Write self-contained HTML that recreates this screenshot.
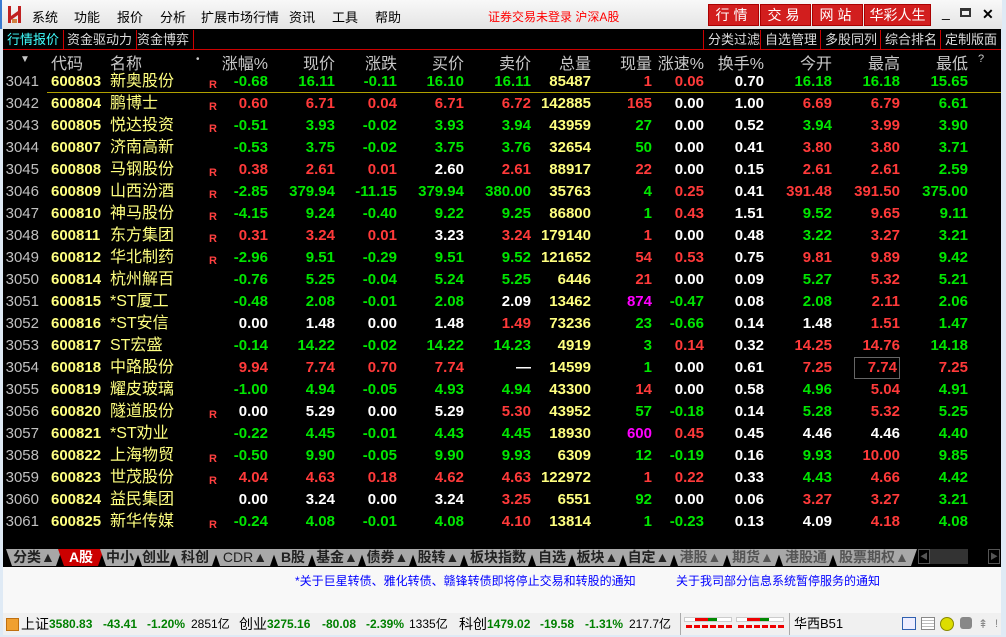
<!DOCTYPE html>
<html><head><meta charset="utf-8"><style>
*{margin:0;padding:0;box-sizing:border-box}
body{width:1006px;height:637px;overflow:hidden;background:#dfeaf5;font-family:"Liberation Sans","Noto Sans CJK SC",sans-serif;position:relative}
.title{position:absolute;left:0;top:0;width:1002px;height:29px;background:linear-gradient(#f8f8f8,#e4e4e4);border-left:2px solid #3a7ad0}
.menu{position:absolute;top:7px;font-size:13px;color:#000}
.logo{position:absolute;left:6px;top:6px;width:14px;height:17px}
.btn{position:absolute;top:4px;height:22px;background:#d21e1e;border:1px solid #a00;color:#fff;font-size:14px;text-align:center;line-height:20px;letter-spacing:4px}
.main{position:absolute;left:3px;top:29px;width:998px;height:518px;background:#000}
.tab{position:absolute;top:1px;height:19px;font-size:13px;line-height:19px;color:#ddd;border-right:1px solid #c00;padding:0 4px}
.tr{position:absolute;top:1px;height:19px;font-size:13px;line-height:19px;color:#ddd;border-left:1px solid #c00;padding:0 4px}
.redline{position:absolute;left:0;top:20px;width:998px;height:1px;background:#c00}
.hdr{position:absolute;top:21px;height:20px;left:0;width:998px;font-size:16px;color:#c8c8c8}
.row{position:absolute;left:0;width:998px;height:22px;font-size:15px;font-weight:bold;line-height:22px}
.row span,.hdr span{position:absolute;white-space:nowrap}
.i{left:0;width:36px;text-align:right;color:#c0c0c0;font-weight:normal}
.c{left:48px;color:#ffff80}
.n{left:107px;color:#ffff80;font-weight:normal;font-size:16px}
.R{left:206px;color:#ff4040;font-size:11px;top:3px}
.k1,.k2,.k3,.k4,.k5,.k6,.k7,.k8,.k9,.k10,.k11,.k12{width:70px;text-align:right}
.k1{left:195px}.k2{left:262px}.k3{left:324px}.k4{left:391px}.k5{left:458px}.k6{left:518px}.k7{left:579px}.k8{left:631px}.k9{left:691px}.k10{left:759px}.k11{left:827px}.k12{left:895px}
.g{color:#00e600}.r{color:#ff3a3a}.w{color:#fff}.y{color:#ffff80}.m{color:#ff00ff}
.btabs{position:absolute;left:3px;top:547px;width:998px;height:20px;background:#000}
.bt{position:absolute;top:2px;height:17px;background:#a8a8a8;color:#222;font-size:14px;font-weight:bold;line-height:17px;text-align:center;clip-path:polygon(0 0,100% 0,calc(100% - 6px) 100%,6px 100%)}
.notice{position:absolute;left:3px;top:567px;width:998px;height:46px;background:#f8f8f8;color:#0000ff;font-size:12px}
.status{position:absolute;left:3px;top:613px;width:998px;height:22px;background:#f0f0f0;font-size:12px;line-height:22px}
.status span{position:absolute}
.sg{color:#008000;font-weight:bold}
</style></head><body>
<div class="title">
 <svg class="logo" viewBox="0 0 14 17"><rect x="0" y="0" width="3" height="17" fill="#c02020"/><rect x="10" y="0" width="3" height="17" fill="#c02020"/><polygon points="3,10 10,5 10,9 3,14" fill="#c02020"/><rect x="4" y="13" width="5" height="4" fill="#d08040"/></svg>
 <span class="menu" style="left:30px">系统</span><span class="menu" style="left:72px">功能</span><span class="menu" style="left:115px">报价</span><span class="menu" style="left:158px">分析</span><span class="menu" style="left:199px">扩展市场行情</span><span class="menu" style="left:287px">资讯</span><span class="menu" style="left:330px">工具</span><span class="menu" style="left:373px">帮助</span>
 <span class="menu" style="left:486px;color:#f00;font-size:12px;top:8px">证券交易未登录 沪深A股</span>
 <div class="btn" style="left:706px;width:51px">行情</div><div class="btn" style="left:758px;width:51px">交易</div><div class="btn" style="left:810px;width:51px">网站</div><div class="btn" style="left:862px;width:67px;letter-spacing:0">华彩人生</div>
 <span class="menu" style="left:940px;top:4px;font-size:14px">_</span><span class="menu" style="left:958px;top:8px;width:11px;height:9px;border:2px solid #333;border-top-width:3px"></span><span class="menu" style="left:980px;top:6px;font-weight:bold;font-size:14px">✕</span>
</div>
<div class="main">
 <div class="tab" style="left:0;color:#40ffff">行情报价</div><div class="tab" style="left:60px">资金驱动力</div><div class="tab" style="left:130px">资金博弈</div>
 <div class="tr" style="left:700px">分类过滤</div><div class="tr" style="left:757px">自选管理</div><div class="tr" style="left:817px">多股同列</div><div class="tr" style="left:877px">综合排名</div><div class="tr" style="left:937px">定制版面</div>
 <div class="redline"></div>
 <div class="hdr">
  <span style="left:17px;font-size:10px;top:4px">▼</span><span style="left:48px">代码</span><span style="left:107px">名称</span><span style="left:193px;font-size:10px;top:4px">•</span>
  <span class="k1">涨幅%</span><span class="k2">现价</span><span class="k3">涨跌</span><span class="k4">买价</span><span class="k5">卖价</span><span class="k6">总量</span><span class="k7">现量</span><span class="k8">涨速%</span><span class="k9">换手%</span><span class="k10">今开</span><span class="k11">最高</span><span class="k12">最低</span><span style="left:975px;font-size:11px;top:3px">?</span>
 </div>
 <div style="position:absolute;left:44px;top:63px;width:954px;height:1px;background:#b0a000"></div>

<div class="row" style="top:42px"><span class="i">3041</span><span class="c">600803</span><span class="n">新奥股份</span><span class="R">R</span><span class="k1 g">-0.68</span><span class="k2 g">16.11</span><span class="k3 g">-0.11</span><span class="k4 g">16.10</span><span class="k5 g">16.11</span><span class="k6 y">85487</span><span class="k7 r">1</span><span class="k8 r">0.06</span><span class="k9 w">0.70</span><span class="k10 g">16.18</span><span class="k11 g">16.18</span><span class="k12 g">15.65</span></div>
<div class="row" style="top:64px"><span class="i">3042</span><span class="c">600804</span><span class="n">鹏博士</span><span class="R">R</span><span class="k1 r">0.60</span><span class="k2 r">6.71</span><span class="k3 r">0.04</span><span class="k4 r">6.71</span><span class="k5 r">6.72</span><span class="k6 y">142885</span><span class="k7 r">165</span><span class="k8 w">0.00</span><span class="k9 w">1.00</span><span class="k10 r">6.69</span><span class="k11 r">6.79</span><span class="k12 g">6.61</span></div>
<div class="row" style="top:86px"><span class="i">3043</span><span class="c">600805</span><span class="n">悦达投资</span><span class="R">R</span><span class="k1 g">-0.51</span><span class="k2 g">3.93</span><span class="k3 g">-0.02</span><span class="k4 g">3.93</span><span class="k5 g">3.94</span><span class="k6 y">43959</span><span class="k7 g">27</span><span class="k8 w">0.00</span><span class="k9 w">0.52</span><span class="k10 g">3.94</span><span class="k11 r">3.99</span><span class="k12 g">3.90</span></div>
<div class="row" style="top:108px"><span class="i">3044</span><span class="c">600807</span><span class="n">济南高新</span><span class="k1 g">-0.53</span><span class="k2 g">3.75</span><span class="k3 g">-0.02</span><span class="k4 g">3.75</span><span class="k5 g">3.76</span><span class="k6 y">32654</span><span class="k7 g">50</span><span class="k8 w">0.00</span><span class="k9 w">0.41</span><span class="k10 r">3.80</span><span class="k11 r">3.80</span><span class="k12 g">3.71</span></div>
<div class="row" style="top:130px"><span class="i">3045</span><span class="c">600808</span><span class="n">马钢股份</span><span class="R">R</span><span class="k1 r">0.38</span><span class="k2 r">2.61</span><span class="k3 r">0.01</span><span class="k4 w">2.60</span><span class="k5 r">2.61</span><span class="k6 y">88917</span><span class="k7 r">22</span><span class="k8 w">0.00</span><span class="k9 w">0.15</span><span class="k10 r">2.61</span><span class="k11 r">2.61</span><span class="k12 g">2.59</span></div>
<div class="row" style="top:152px"><span class="i">3046</span><span class="c">600809</span><span class="n">山西汾酒</span><span class="R">R</span><span class="k1 g">-2.85</span><span class="k2 g">379.94</span><span class="k3 g">-11.15</span><span class="k4 g">379.94</span><span class="k5 g">380.00</span><span class="k6 y">35763</span><span class="k7 g">4</span><span class="k8 r">0.25</span><span class="k9 w">0.41</span><span class="k10 r">391.48</span><span class="k11 r">391.50</span><span class="k12 g">375.00</span></div>
<div class="row" style="top:174px"><span class="i">3047</span><span class="c">600810</span><span class="n">神马股份</span><span class="R">R</span><span class="k1 g">-4.15</span><span class="k2 g">9.24</span><span class="k3 g">-0.40</span><span class="k4 g">9.22</span><span class="k5 g">9.25</span><span class="k6 y">86800</span><span class="k7 g">1</span><span class="k8 r">0.43</span><span class="k9 w">1.51</span><span class="k10 g">9.52</span><span class="k11 r">9.65</span><span class="k12 g">9.11</span></div>
<div class="row" style="top:196px"><span class="i">3048</span><span class="c">600811</span><span class="n">东方集团</span><span class="R">R</span><span class="k1 r">0.31</span><span class="k2 r">3.24</span><span class="k3 r">0.01</span><span class="k4 w">3.23</span><span class="k5 r">3.24</span><span class="k6 y">179140</span><span class="k7 r">1</span><span class="k8 w">0.00</span><span class="k9 w">0.48</span><span class="k10 g">3.22</span><span class="k11 r">3.27</span><span class="k12 g">3.21</span></div>
<div class="row" style="top:218px"><span class="i">3049</span><span class="c">600812</span><span class="n">华北制药</span><span class="R">R</span><span class="k1 g">-2.96</span><span class="k2 g">9.51</span><span class="k3 g">-0.29</span><span class="k4 g">9.51</span><span class="k5 g">9.52</span><span class="k6 y">121652</span><span class="k7 r">54</span><span class="k8 r">0.53</span><span class="k9 w">0.75</span><span class="k10 r">9.81</span><span class="k11 r">9.89</span><span class="k12 g">9.42</span></div>
<div class="row" style="top:240px"><span class="i">3050</span><span class="c">600814</span><span class="n">杭州解百</span><span class="k1 g">-0.76</span><span class="k2 g">5.25</span><span class="k3 g">-0.04</span><span class="k4 g">5.24</span><span class="k5 g">5.25</span><span class="k6 y">6446</span><span class="k7 r">21</span><span class="k8 w">0.00</span><span class="k9 w">0.09</span><span class="k10 g">5.27</span><span class="k11 r">5.32</span><span class="k12 g">5.21</span></div>
<div class="row" style="top:262px"><span class="i">3051</span><span class="c">600815</span><span class="n">*ST厦工</span><span class="k1 g">-0.48</span><span class="k2 g">2.08</span><span class="k3 g">-0.01</span><span class="k4 g">2.08</span><span class="k5 w">2.09</span><span class="k6 y">13462</span><span class="k7 m">874</span><span class="k8 g">-0.47</span><span class="k9 w">0.08</span><span class="k10 g">2.08</span><span class="k11 r">2.11</span><span class="k12 g">2.06</span></div>
<div class="row" style="top:284px"><span class="i">3052</span><span class="c">600816</span><span class="n">*ST安信</span><span class="k1 w">0.00</span><span class="k2 w">1.48</span><span class="k3 w">0.00</span><span class="k4 w">1.48</span><span class="k5 r">1.49</span><span class="k6 y">73236</span><span class="k7 g">23</span><span class="k8 g">-0.66</span><span class="k9 w">0.14</span><span class="k10 w">1.48</span><span class="k11 r">1.51</span><span class="k12 g">1.47</span></div>
<div class="row" style="top:306px"><span class="i">3053</span><span class="c">600817</span><span class="n">ST宏盛</span><span class="k1 g">-0.14</span><span class="k2 g">14.22</span><span class="k3 g">-0.02</span><span class="k4 g">14.22</span><span class="k5 g">14.23</span><span class="k6 y">4919</span><span class="k7 g">3</span><span class="k8 r">0.14</span><span class="k9 w">0.32</span><span class="k10 r">14.25</span><span class="k11 r">14.76</span><span class="k12 g">14.18</span></div>
<div class="row" style="top:328px"><span class="i">3054</span><span class="c">600818</span><span class="n">中路股份</span><span class="k1 r">9.94</span><span class="k2 r">7.74</span><span class="k3 r">0.70</span><span class="k4 r">7.74</span><span class="k5 w">—</span><span class="k6 y">14599</span><span class="k7 g">1</span><span class="k8 w">0.00</span><span class="k9 w">0.61</span><span class="k10 r">7.25</span><span class="k11 r" style="border:1px solid #666;width:46px;left:851px;line-height:20px;height:22px;padding-right:2px">7.74</span><span class="k12 r">7.25</span></div>
<div class="row" style="top:350px"><span class="i">3055</span><span class="c">600819</span><span class="n">耀皮玻璃</span><span class="k1 g">-1.00</span><span class="k2 g">4.94</span><span class="k3 g">-0.05</span><span class="k4 g">4.93</span><span class="k5 g">4.94</span><span class="k6 y">43300</span><span class="k7 r">14</span><span class="k8 w">0.00</span><span class="k9 w">0.58</span><span class="k10 g">4.96</span><span class="k11 r">5.04</span><span class="k12 g">4.91</span></div>
<div class="row" style="top:372px"><span class="i">3056</span><span class="c">600820</span><span class="n">隧道股份</span><span class="R">R</span><span class="k1 w">0.00</span><span class="k2 w">5.29</span><span class="k3 w">0.00</span><span class="k4 w">5.29</span><span class="k5 r">5.30</span><span class="k6 y">43952</span><span class="k7 g">57</span><span class="k8 g">-0.18</span><span class="k9 w">0.14</span><span class="k10 g">5.28</span><span class="k11 r">5.32</span><span class="k12 g">5.25</span></div>
<div class="row" style="top:394px"><span class="i">3057</span><span class="c">600821</span><span class="n">*ST劝业</span><span class="k1 g">-0.22</span><span class="k2 g">4.45</span><span class="k3 g">-0.01</span><span class="k4 g">4.43</span><span class="k5 g">4.45</span><span class="k6 y">18930</span><span class="k7 m">600</span><span class="k8 r">0.45</span><span class="k9 w">0.45</span><span class="k10 w">4.46</span><span class="k11 w">4.46</span><span class="k12 g">4.40</span></div>
<div class="row" style="top:416px"><span class="i">3058</span><span class="c">600822</span><span class="n">上海物贸</span><span class="R">R</span><span class="k1 g">-0.50</span><span class="k2 g">9.90</span><span class="k3 g">-0.05</span><span class="k4 g">9.90</span><span class="k5 g">9.93</span><span class="k6 y">6309</span><span class="k7 g">12</span><span class="k8 g">-0.19</span><span class="k9 w">0.16</span><span class="k10 g">9.93</span><span class="k11 r">10.00</span><span class="k12 g">9.85</span></div>
<div class="row" style="top:438px"><span class="i">3059</span><span class="c">600823</span><span class="n">世茂股份</span><span class="R">R</span><span class="k1 r">4.04</span><span class="k2 r">4.63</span><span class="k3 r">0.18</span><span class="k4 r">4.62</span><span class="k5 r">4.63</span><span class="k6 y">122972</span><span class="k7 r">1</span><span class="k8 r">0.22</span><span class="k9 w">0.33</span><span class="k10 g">4.43</span><span class="k11 r">4.66</span><span class="k12 g">4.42</span></div>
<div class="row" style="top:460px"><span class="i">3060</span><span class="c">600824</span><span class="n">益民集团</span><span class="k1 w">0.00</span><span class="k2 w">3.24</span><span class="k3 w">0.00</span><span class="k4 w">3.24</span><span class="k5 r">3.25</span><span class="k6 y">6551</span><span class="k7 g">92</span><span class="k8 w">0.00</span><span class="k9 w">0.06</span><span class="k10 r">3.27</span><span class="k11 r">3.27</span><span class="k12 g">3.21</span></div>
<div class="row" style="top:482px"><span class="i">3061</span><span class="c">600825</span><span class="n">新华传媒</span><span class="R">R</span><span class="k1 g">-0.24</span><span class="k2 g">4.08</span><span class="k3 g">-0.01</span><span class="k4 g">4.08</span><span class="k5 r">4.10</span><span class="k6 y">13814</span><span class="k7 g">1</span><span class="k8 g">-0.23</span><span class="k9 w">0.13</span><span class="k10 w">4.09</span><span class="k11 r">4.18</span><span class="k12 g">4.08</span></div>
</div>
<div class="btabs">
 <div class="bt" style="left:3px;width:56px">分类▲</div>
 <div class="bt" style="left:55px;width:46px;background:#c00;color:#fff">A股</div>
 <div class="bt" style="left:97px;width:40px">中小</div>
 <div class="bt" style="left:133px;width:40px">创业</div>
 <div class="bt" style="left:169px;width:46px">科创</div>
 <div class="bt" style="left:211px;width:62px;font-weight:normal">CDR▲</div>
 <div class="bt" style="left:269px;width:42px">B股</div>
 <div class="bt" style="left:307px;width:54px">基金▲</div>
 <div class="bt" style="left:357px;width:55px">债券▲</div>
 <div class="bt" style="left:408px;width:55px">股转▲</div>
 <div class="bt" style="left:459px;width:72px">板块指数</div>
 <div class="bt" style="left:527px;width:44px">自选</div>
 <div class="bt" style="left:567px;width:55px">板块▲</div>
 <div class="bt" style="left:618px;width:55px">自定▲</div>
 <div class="bt" style="left:669px;width:57px;color:#555">港股▲</div>
 <div class="bt" style="left:722px;width:56px;color:#555">期货▲</div>
 <div class="bt" style="left:774px;width:58px;color:#555">港股通</div>
 <div class="bt" style="left:828px;width:86px;color:#555">股票期权▲</div>
 <div style="position:absolute;left:915px;top:2px;width:12px;height:15px;border:1px solid #555;color:#555;font-size:8px;line-height:13px;text-align:center">◀</div>
 <div style="position:absolute;left:927px;top:2px;width:38px;height:15px;background:#333"></div>
 <div style="position:absolute;left:985px;top:2px;width:12px;height:15px;border:1px solid #555;color:#555;font-size:8px;line-height:13px;text-align:center">▶</div>
</div>
<div class="notice"><span style="position:absolute;left:292px;top:5px">*关于巨星转债、雅化转债、赣锋转债即将停止交易和转股的通知</span><span style="position:absolute;left:673px;top:5px">关于我司部分信息系统暂停服务的通知</span></div>
<div class="status">
 <span style="left:3px;top:5px;width:13px;height:13px;background:#f0a030;border:1px solid #c07010"></span>
 <span style="left:18px;font-size:14px">上证</span><span class="sg" style="left:46px">3580.83</span><span class="sg" style="left:100px">-43.41</span><span class="sg" style="left:144px">-1.20%</span><span style="left:188px">2851亿</span>
 <span style="left:236px;font-size:14px">创业</span><span class="sg" style="left:264px">3275.16</span><span class="sg" style="left:319px">-80.08</span><span class="sg" style="left:363px">-2.39%</span><span style="left:406px">1335亿</span>
 <span style="left:456px;font-size:14px">科创</span><span class="sg" style="left:484px">1479.02</span><span class="sg" style="left:537px">-19.58</span><span class="sg" style="left:582px">-1.31%</span><span style="left:626px">217.7亿</span>
 <span style="left:677px;top:0;width:1px;height:22px;background:#aaa"></span>
 <span style="left:681px;top:4px;width:48px;height:5px;border:1px solid #ccc;background:linear-gradient(90deg,#fff 10px,#e00 10px,#e00 23px,#080 23px,#080 32px,#fff 32px)"></span>
 <span style="left:683px;top:12px;width:46px;height:3px;background:repeating-linear-gradient(90deg,#e00 0 6px,transparent 6px 8px)"></span>
 <span style="left:733px;top:4px;width:48px;height:5px;border:1px solid #ccc;background:linear-gradient(90deg,#fff 10px,#e00 10px,#e00 23px,#080 23px,#080 32px,#fff 32px)"></span>
 <span style="left:735px;top:12px;width:46px;height:3px;background:repeating-linear-gradient(90deg,#e00 0 6px,transparent 6px 8px)"></span>
 <span style="left:786px;top:0;width:1px;height:22px;background:#aaa"></span>
 <span style="left:791px;font-size:13px">华西B51</span>
 <span style="left:899px;top:4px;width:14px;height:13px;border:1px solid #3060b0;background:#eef"></span>
 <span style="left:918px;top:4px;width:14px;height:13px;border:1px solid #888;background:repeating-linear-gradient(#fff 0 2px,#bbb 2px 3px)"></span>
 <span style="left:937px;top:4px;width:14px;height:14px;border-radius:50%;background:#dd0;border:1px solid #880"></span>
 <span style="left:957px;top:4px;width:12px;height:12px;background:#888;border-radius:3px"></span>
 <span style="left:975px;color:#888">⇞</span><span style="left:992px;color:#888;font-size:11px">!</span>
</div>
</body></html>
